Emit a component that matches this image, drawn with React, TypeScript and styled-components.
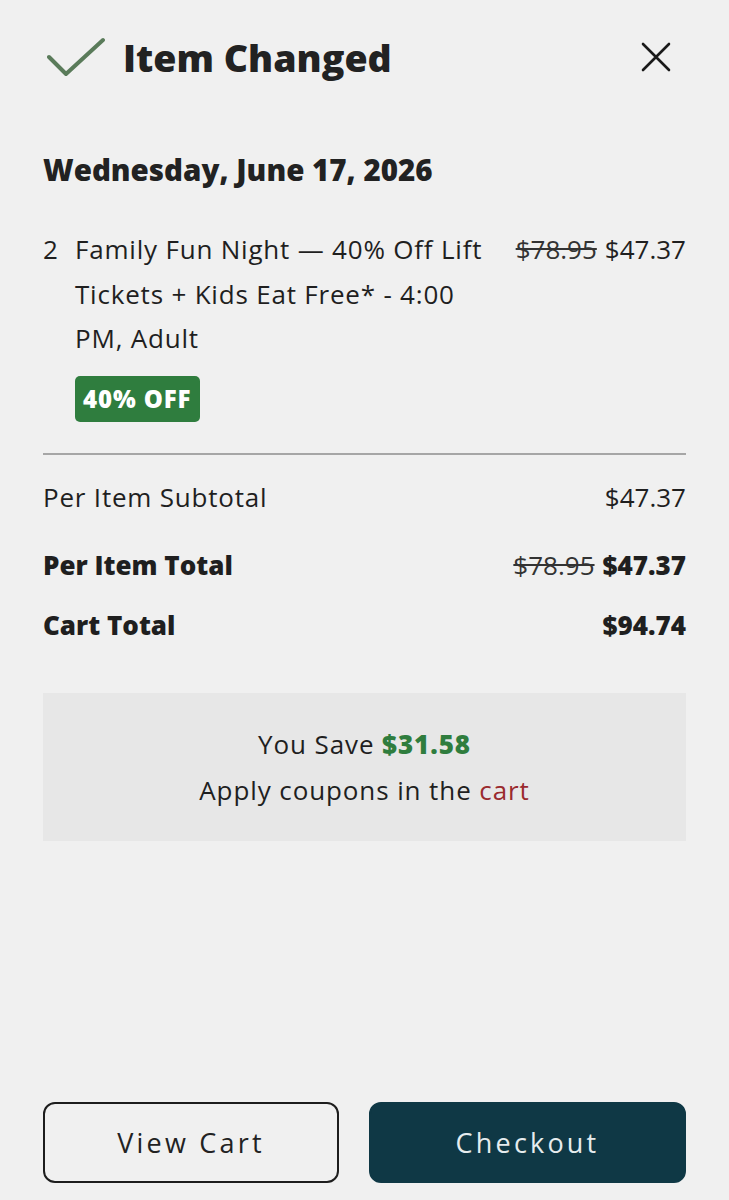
import * as React from "react";
import styled, { createGlobalStyle } from "styled-components";

const GlobalStyle = createGlobalStyle`
  html, body {
    margin: 0;
    padding: 0;
    background: #f0f0f0;
  }
  body {
    font-family: "Open Sans", "Lato", sans-serif;
    color: #1f1f1f;
  }
`;

const Page = styled.div`
  box-sizing: border-box;
  min-height: 1200px;
  padding: 34px 43px 17px 43px;
  display: flex;
  flex-direction: column;
`;

const Header = styled.div`
  display: flex;
  align-items: center;
  justify-content: space-between;
  height: 46px;
`;

const Title = styled.h1`
  display: flex;
  align-items: center;
  gap: 18px;
  margin: 0 0 0 4px;
  font-size: 37.5px;
  font-weight: 800;
  color: #222;
`;

const CloseButton = styled.button`
  border: none;
  background: none;
  padding: 0;
  margin-right: 14px;
  width: 32px;
  height: 32px;
  display: flex;
  align-items: center;
  justify-content: center;
  cursor: pointer;
`;

const DateHeading = styled.h2`
  margin: 70px 0 0 0;
  font-size: 29.5px;
  font-weight: 800;
  line-height: 40px;
  color: #222;
`;

const ItemRow = styled.div`
  display: grid;
  grid-template-columns: 32px 1fr auto;
  margin-top: 37px;
  font-size: 26px;
  line-height: 44.5px;
  letter-spacing: 0.8px;
`;

const Qty = styled.div``;

const Description = styled.div`
  max-width: 425px;
`;

const Prices = styled.div`
  display: flex;
  gap: 8px;
  white-space: nowrap;
  align-self: start;
  letter-spacing: 0;
`;

const Struck = styled.span`
  text-decoration: line-through;
  color: #333;
`;

const Badge = styled.span`
  display: inline-block;
  margin-top: 15px;
  padding: 0 9px 0 8px;
  height: 46px;
  line-height: 46px;
  border-radius: 5px;
  background: #2f7d3e;
  color: #fff;
  font-size: 24px;
  font-weight: 800;
  letter-spacing: 0.9px;
`;

const Divider = styled.hr`
  margin: 31px 0 0 0;
  border: none;
  border-top: 2px solid #a6a6a6;
`;

const SummaryRow = styled.div<{ $bold?: boolean; $top: number }>`
  display: flex;
  justify-content: space-between;
  align-items: center;
  margin-top: ${(p) => p.$top}px;
  font-size: 26px;
  font-weight: ${(p) => (p.$bold ? 800 : 400)};
  letter-spacing: ${(p) => (p.$bold ? 0 : 0.8)}px;
  line-height: 36px;
`;

const Amounts = styled.div`
  display: flex;
  gap: 8px;
`;

const Price = styled.span`
  letter-spacing: 0;
`;

const StruckLight = styled.span`
  text-decoration: line-through;
  font-weight: 400;
  color: #333;
`;

const SaveBox = styled.div`
  margin-top: 50px;
  height: 148px;
  background: #e7e7e7;
  display: flex;
  flex-direction: column;
  align-items: center;
  justify-content: center;
  gap: 10px;
  font-size: 26px;
  line-height: 36px;
  letter-spacing: 0.9px;
`;

const Green = styled.span`
  color: #2f7d3e;
  font-weight: 800;
`;

const Red = styled.span`
  color: #9a2a2e;
`;

const Footer = styled.div`
  margin-top: auto;
  display: grid;
  grid-template-columns: 296px 317px;
  justify-content: space-between;
`;

const ActionButton = styled.button<{ $primary?: boolean }>`
  box-sizing: border-box;
  height: 81px;
  border-radius: 12px;
  border: 2px solid ${(p) => (p.$primary ? "#0f3845" : "#1d1d1d")};
  background: ${(p) => (p.$primary ? "#0f3845" : "transparent")};
  color: ${(p) => (p.$primary ? "#e6ecee" : "#222")};
  font-family: "Open Sans", sans-serif;
  font-size: 27px;
  letter-spacing: 3.2px;
  cursor: pointer;
`;

const CheckIcon = () => (
  <svg width="58" height="40" viewBox="0 0 58 40" fill="none">
    <path
      d="M2 20 L19 37 L56 3"
      stroke="#5a7b5a"
      strokeWidth="4"
      strokeLinecap="round"
      strokeLinejoin="round"
    />
  </svg>
);

const CloseIcon = () => (
  <svg width="30" height="30" viewBox="0 0 30 30" fill="none">
    <path d="M2 2 L28 28 M28 2 L2 28" stroke="#1a1a1a" strokeWidth="2.6" strokeLinecap="round" />
  </svg>
);

const App = () => {
  return (
    <>
      <GlobalStyle />
      <Page>
        <Header>
          <Title>
            <CheckIcon />
            Item Changed
          </Title>
          <CloseButton aria-label="Close">
            <CloseIcon />
          </CloseButton>
        </Header>

        <DateHeading>Wednesday, June 17, 2026</DateHeading>

        <ItemRow>
          <Qty>2</Qty>
          <Description>
            Family Fun Night — 40% Off Lift Tickets + Kids Eat Free* - 4:00 PM, Adult
            <div>
              <Badge>40% OFF</Badge>
            </div>
          </Description>
          <Prices>
            <Struck>$78.95</Struck>
            <span>$47.37</span>
          </Prices>
        </ItemRow>

        <Divider />

        <SummaryRow $top={24}>
          <span>Per Item Subtotal</span>
          <Price>$47.37</Price>
        </SummaryRow>
        <SummaryRow $bold $top={32}>
          <span>Per Item Total</span>
          <Amounts>
            <StruckLight>$78.95</StruckLight>
            <span>$47.37</span>
          </Amounts>
        </SummaryRow>
        <SummaryRow $bold $top={24}>
          <span>Cart Total</span>
          <span>$94.74</span>
        </SummaryRow>

        <SaveBox>
          <div>
            You Save <Green>$31.58</Green>
          </div>
          <div>
            Apply coupons in the <Red>cart</Red>
          </div>
        </SaveBox>

        <Footer>
          <ActionButton>View Cart</ActionButton>
          <ActionButton $primary>Checkout</ActionButton>
        </Footer>
      </Page>
    </>
  );
};

export default App;
